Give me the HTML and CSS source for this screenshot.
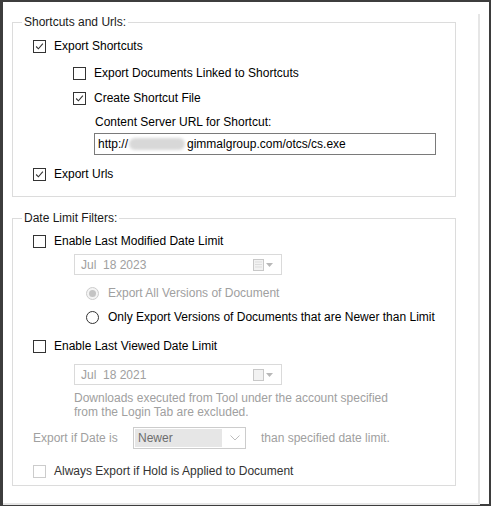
FILE: index.html
```html
<!DOCTYPE html>
<html lang="en">
<head>
<meta charset="UTF-8" />
<title>Export Options</title>
<meta name="viewport" content="width=device-width, initial-scale=1.0" />
<link rel="stylesheet" href="styles.css">
</head>
<body>
<div class="frame">
  <div class="panel">

    <fieldset class="group group-shortcuts">
      <legend>Shortcuts and Urls:</legend>

      <div class="row lvl1 first">
        <span class="check on"><svg viewBox="0 0 13 13"><path d="M2.5 6.5 L5.2 9.2 L10.5 3.2" /></svg></span>
        <span>Export Shortcuts</span>
      </div>
      <div class="row lvl2 r-docs">
        <span class="check"></span>
        <span>Export Documents Linked to Shortcuts</span>
      </div>
      <div class="row lvl2 r-file">
        <span class="check on"><svg viewBox="0 0 13 13"><path d="M2.5 6.5 L5.2 9.2 L10.5 3.2" /></svg></span>
        <span>Create Shortcut File</span>
      </div>
      <div class="url-label">Content Server URL for Shortcut:</div>
      <div class="url-box">
        <span>http://</span><span class="smudge"></span><span>gimmalgroup.com/otcs/cs.exe</span>
      </div>
      <div class="row lvl1 r-urls">
        <span class="check on"><svg viewBox="0 0 13 13"><path d="M2.5 6.5 L5.2 9.2 L10.5 3.2" /></svg></span>
        <span>Export Urls</span>
      </div>
    </fieldset>

    <fieldset class="group group-dates">
      <legend>Date Limit Filters:</legend>

      <div class="row lvl1 first">
        <span class="check"></span>
        <span>Enable Last Modified Date Limit</span>
      </div>
      <div class="datepick">
        <span class="date-text">Jul&nbsp;&nbsp;18 2023</span>
        <span class="cal-btn">
          <svg width="11" height="12" viewBox="0 0 11 12"><rect x="0.5" y="0.5" width="10" height="11" fill="#f2f2f2" stroke="#c8c8c8"/><path d="M2 3h7M2 5.5h7M2 8h7" stroke="#dddddd"/></svg>
          <svg width="7" height="4" viewBox="0 0 7 4"><path d="M0 0h7L3.5 4z" fill="#b8b8b8"/></svg>
        </span>
      </div>
      <div class="row radio-row r-all">
        <span class="radio disabled"><span class="dot"></span></span>
        <span class="muted">Export All Versions of Document</span>
      </div>
      <div class="row radio-row r-newer">
        <span class="radio"></span>
        <span>Only Export Versions of Documents that are Newer than Limit</span>
      </div>

      <div class="row lvl1 r-viewed">
        <span class="check"></span>
        <span>Enable Last Viewed Date Limit</span>
      </div>
      <div class="datepick dp2">
        <span class="date-text">Jul&nbsp;&nbsp;18 2021</span>
        <span class="cal-btn">
          <svg width="11" height="12" viewBox="0 0 11 12"><rect x="0.5" y="0.5" width="10" height="11" fill="#f2f2f2" stroke="#c8c8c8"/></svg>
          <svg width="7" height="4" viewBox="0 0 7 4"><path d="M0 0h7L3.5 4z" fill="#b8b8b8"/></svg>
        </span>
      </div>
      <p class="note">Downloads executed from Tool under the account specified<br>from the Login Tab are excluded.</p>

      <div class="compare-row">
        <span class="muted compare-label">Export if Date is</span>
        <span class="combo">
          <span class="combo-val">Newer</span>
          <svg width="10" height="6" viewBox="0 0 10 6"><path d="M0.5 0.5 L5 5 L9.5 0.5" fill="none" stroke="#bdbdbd"/></svg>
        </span>
        <span class="muted">than specified date limit.</span>
      </div>

      <div class="row lvl1 r-hold">
        <span class="check disabled"></span>
        <span class="hold-text">Always Export if Hold is Applied to Document</span>
      </div>
    </fieldset>

  </div>
</div>
</body>
</html>
```

FILE: styles.css
```css
html, body {
  margin: 0;
  background: #ffffff;
}
body {
  font-family: "Liberation Sans", Arial, sans-serif;
  font-size: 12px;
  color: #000;
}
.frame {
  width: 491px;
  height: 506px;
  box-sizing: border-box;
  border-style: solid;
  border-color: #3d3d3d;
  border-width: 2px 2px 2px 3px;
  background: #fff;
}
.panel {
  width: 477px;
  height: 491px;
  box-sizing: border-box;
  border-right: 2px solid #e6e6e6;
  border-bottom: 2px solid #e6e6e6;
  padding: 0 22px 0 9px;
}

/* group boxes */
.group {
  margin: 0;
  border: 1px solid #dcdcdc;
  padding: 0 8px 12px 20px;
  min-width: 0;
}
.group legend {
  padding: 0 2px;
  margin-left: -11px;
  line-height: 16px;
  color: #1a1a1a;
}
.group-shortcuts {
  margin-top: 12px;
}
.group-dates {
  margin-top: 13px;
  padding-bottom: 4px;
}

/* rows */
.row {
  display: flex;
  align-items: center;
  height: 20px;
  margin-top: 6px;
}
.group-dates .row.first { margin-top: 5px; }
.lvl2 { padding-left: 40px; }
.r-docs { margin-top: 7px; }
.r-file { margin-top: 5px; }
.r-urls { margin-top: 9px; }
.check {
  width: 13px;
  height: 13px;
  box-sizing: border-box;
  border: 1px solid #333;
  background: #fff;
  margin-right: 8px;
  flex: none;
  display: flex;
}
.check svg {
  width: 11px;
  height: 11px;
}
.check path {
  fill: none;
  stroke: #333;
  stroke-width: 1.3;
}
.check.disabled {
  border-color: #cccccc;
}

.url-label {
  padding-left: 62px;
  line-height: 16px;
  margin-top: 6px;
}
.url-box {
  margin: 3px 0 0 61px;
  height: 22px;
  box-sizing: border-box;
  border: 1px solid #7a7a7a;
  display: flex;
  align-items: center;
  padding-left: 3px;
  width: 342px;
}
.smudge {
  width: 56px;
  height: 12px;
  margin: 0 2px 0 1px;
  background: #d8d8d8;
  border-radius: 6px;
  filter: blur(1.5px);
}

/* date pickers */
.datepick {
  margin: 3px 0 0 41px;
  width: 208px;
  height: 21px;
  box-sizing: border-box;
  border: 1px solid #dadada;
  display: flex;
  align-items: center;
  justify-content: space-between;
  padding: 0 8px 0 6px;
}
.dp2 { margin-top: 8px; }
.date-text { color: #a0a0a0; }
.cal-btn {
  display: flex;
  align-items: center;
  gap: 2px;
}

.radio-row {
  padding-left: 53px;
}
.r-all { margin-top: 8px; }
.r-newer { margin-top: 4px; }
.r-viewed { margin-top: 9px; }
.radio {
  width: 13px;
  height: 13px;
  box-sizing: border-box;
  border: 1px solid #333;
  border-radius: 50%;
  margin-right: 9px;
  display: flex;
  align-items: center;
  justify-content: center;
  flex: none;
}
.radio.disabled {
  border-color: #cccccc;
  background: #f4f4f4;
}
.radio .dot {
  width: 7px;
  height: 7px;
  border-radius: 50%;
  background: #c4c4c4;
}
.muted { color: #a0a0a0; }

.note {
  margin: 6px 0 0 41px;
  line-height: 14px;
  color: #a0a0a0;
}

.compare-row {
  display: flex;
  align-items: center;
  height: 22px;
  margin-top: 8px;
}
.compare-label {
  width: 100px;
}
.combo {
  width: 113px;
  height: 22px;
  box-sizing: border-box;
  border: 1px solid #cccccc;
  margin-right: 15px;
  display: flex;
  align-items: center;
  padding: 1px 5px 1px 1px;
  gap: 8px;
}
.combo-val {
  flex: 1;
  align-self: stretch;
  background: #e6e6e6;
  color: #6d6d6d;
  padding-left: 3px;
  display: flex;
  align-items: center;
}
.r-hold { margin-top: 12px; }
.hold-text { color: #333; }
```
